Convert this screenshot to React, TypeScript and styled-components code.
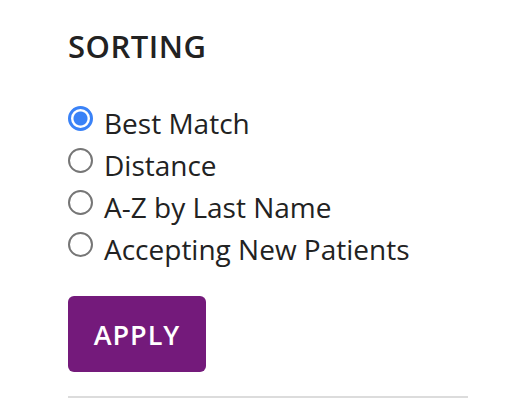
import { useState } from "react";
import styled, { createGlobalStyle } from "styled-components";

const GlobalStyle = createGlobalStyle`
    html, body {
        margin: 0;
        padding: 0;
        background: #fff;
    }

    body {
        font-family: "Open Sans", "Liberation Sans", sans-serif;
        color: #222;
    }
`;

const Panel = styled.div`
    width: 400px;
    padding: 28px 0 0 68px;
`;

const Title = styled.h2`
    margin: 0 0 38px;
    font-size: 31px;
    line-height: 36px;
    font-weight: 600;
    letter-spacing: 0.5px;
    color: #222;
`;

const OptionList = styled.div`
    display: flex;
    flex-direction: column;
`;

const Option = styled.label`
    display: flex;
    align-items: flex-start;
    gap: 11px;
    font-size: 28px;
    line-height: 42px;
    color: #222;
    cursor: pointer;
`;

const Radio = styled.input.attrs({ type: "radio" })`
    appearance: none;
    flex: none;
    width: 25px;
    height: 25px;
    margin: 4px 0 0;
    border: 2px solid #767676;
    border-radius: 50%;
    background: #fff;
    box-sizing: border-box;
    cursor: pointer;

    &:checked {
        border: 3px solid #3a82f7;
        background: radial-gradient(circle, #3a82f7 0 6.5px, #fff 7.5px);
    }
`;

const ApplyButton = styled.button`
    display: flex;
    align-items: center;
    justify-content: center;
    width: 138px;
    height: 76px;
    margin-top: 26px;
    border: none;
    border-radius: 6px;
    background: #741a7b;
    color: #fff;
    font-family: "Open Sans", "Liberation Sans", sans-serif;
    font-size: 27px;
    font-weight: 600;
    letter-spacing: 1px;
    cursor: pointer;
`;

const Divider = styled.hr`
    margin: 24px 0 0;
    border: none;
    height: 2px;
    background: #dcdcdc;
`;

const options = ["Best Match", "Distance", "A-Z by Last Name", "Accepting New Patients"];

export default function App() {
    const [sort, setSort] = useState("Best Match");

    return (
        <>
            <GlobalStyle />
            <Panel>
                <Title>SORTING</Title>
                <OptionList>
                    {options.map(option => (
                        <Option key={option}>
                            <Radio
                                name="sorting"
                                checked={sort === option}
                                onChange={() => setSort(option)}
                            />
                            {option}
                        </Option>
                    ))}
                </OptionList>
                <ApplyButton>APPLY</ApplyButton>
                <Divider />
            </Panel>
        </>
    );
}
